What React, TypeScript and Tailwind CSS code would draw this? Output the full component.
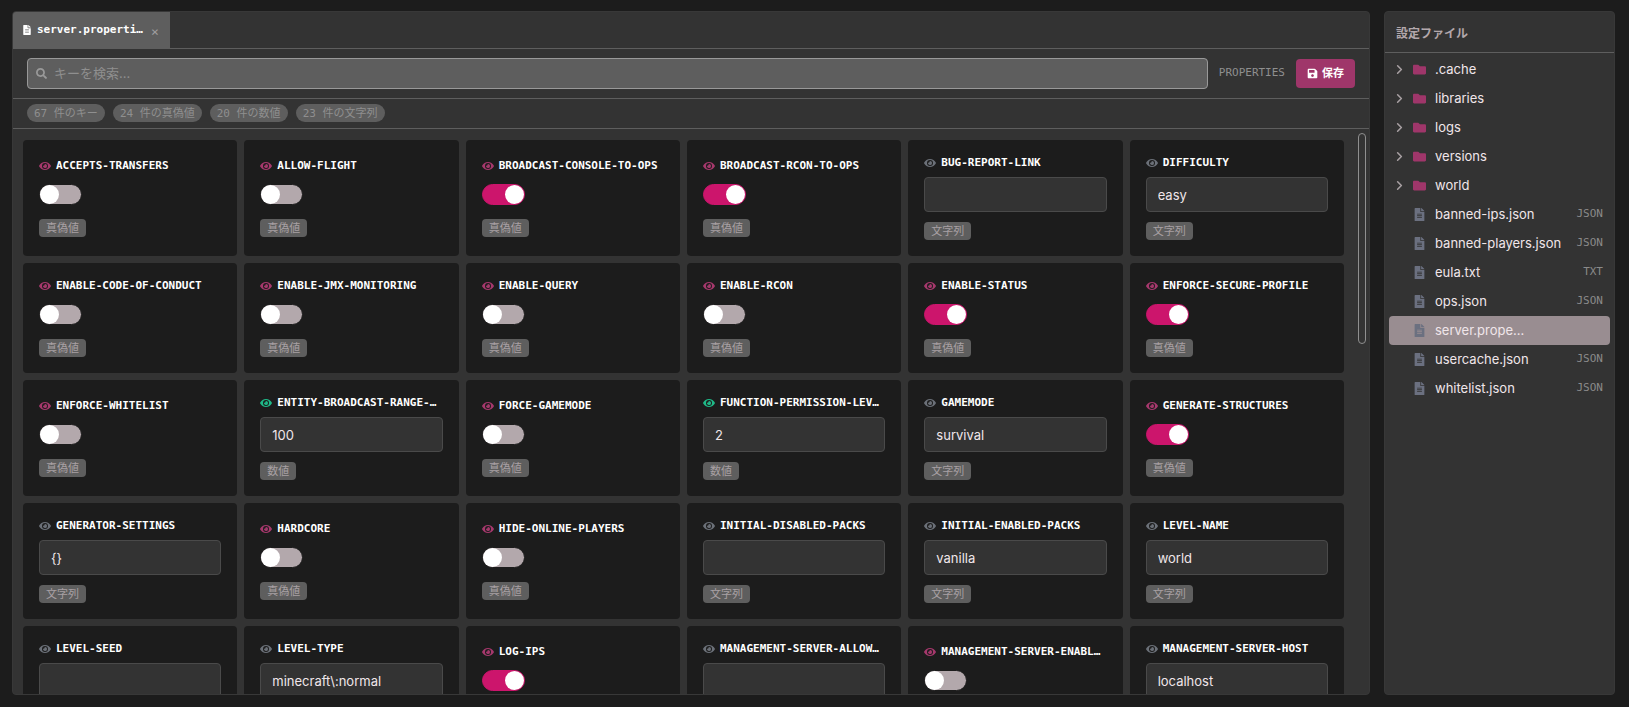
import React, { useState } from "react";
import { FaEye, FaFileAlt, FaFolder, FaSave, FaSearch } from "react-icons/fa";
import { ChevronRight } from "lucide-react";

type PropertyType = "bool" | "number" | "string";

interface Property {
  name: string;
  type: PropertyType;
  value: string;
}

interface FileEntry {
  name: string;
  ext?: string;
  folder?: boolean;
}

const initialProperties: Property[] = [
  { name: "accepts-transfers", type: "bool", value: "false" },
  { name: "allow-flight", type: "bool", value: "false" },
  { name: "broadcast-console-to-ops", type: "bool", value: "true" },
  { name: "broadcast-rcon-to-ops", type: "bool", value: "true" },
  { name: "bug-report-link", type: "string", value: "" },
  { name: "difficulty", type: "string", value: "easy" },
  { name: "enable-code-of-conduct", type: "bool", value: "false" },
  { name: "enable-jmx-monitoring", type: "bool", value: "false" },
  { name: "enable-query", type: "bool", value: "false" },
  { name: "enable-rcon", type: "bool", value: "false" },
  { name: "enable-status", type: "bool", value: "true" },
  { name: "enforce-secure-profile", type: "bool", value: "true" },
  { name: "enforce-whitelist", type: "bool", value: "false" },
  { name: "entity-broadcast-range-…", type: "number", value: "100" },
  { name: "force-gamemode", type: "bool", value: "false" },
  { name: "function-permission-lev…", type: "number", value: "2" },
  { name: "gamemode", type: "string", value: "survival" },
  { name: "generate-structures", type: "bool", value: "true" },
  { name: "generator-settings", type: "string", value: "{}" },
  { name: "hardcore", type: "bool", value: "false" },
  { name: "hide-online-players", type: "bool", value: "false" },
  { name: "initial-disabled-packs", type: "string", value: "" },
  { name: "initial-enabled-packs", type: "string", value: "vanilla" },
  { name: "level-name", type: "string", value: "world" },
  { name: "level-seed", type: "string", value: "" },
  { name: "level-type", type: "string", value: "minecraft\\:normal" },
  { name: "log-ips", type: "bool", value: "true" },
  { name: "management-server-allow…", type: "string", value: "" },
  { name: "management-server-enabl…", type: "bool", value: "false" },
  { name: "management-server-host", type: "string", value: "localhost" },
];

const files: FileEntry[] = [
  { name: ".cache", folder: true },
  { name: "libraries", folder: true },
  { name: "logs", folder: true },
  { name: "versions", folder: true },
  { name: "world", folder: true },
  { name: "banned-ips.json", ext: "JSON" },
  { name: "banned-players.json", ext: "JSON" },
  { name: "eula.txt", ext: "TXT" },
  { name: "ops.json", ext: "JSON" },
  { name: "server.prope..." },
  { name: "usercache.json", ext: "JSON" },
  { name: "whitelist.json", ext: "JSON" },
];

const stats = ["67 件のキー", "24 件の真偽値", "20 件の数値", "23 件の文字列"];

const typeLabels = { bool: "真偽値", number: "数値", string: "文字列" };
const eyeColors = { bool: "text-[#a5386c]", number: "text-[#1fb887]", string: "text-[#6b7078]" };

const mono = "font-['DejaVu_Sans_Mono','Noto_Sans_CJK_JP',monospace]";

function PropertyCard({ property, onChange }: { property: Property; onChange: (value: string) => void }) {
  const checked = property.value === "true";
  return (
    <div className="flex min-w-0 flex-col items-start justify-center rounded bg-[#1c1c1c] p-4">
      <label htmlFor={property.name} className={`${mono} flex w-full items-center gap-[5px] text-[11px] leading-[14px] font-bold whitespace-nowrap text-white uppercase`}>
        <FaEye size={12} className={`shrink-0 ${eyeColors[property.type]}`} />
        {property.name}
      </label>
      {property.type === "bool" ? (
        <input
          id={property.name}
          type="checkbox"
          role="switch"
          checked={checked}
          onChange={(e) => onChange(String(e.target.checked))}
          className="mt-[11px] mb-[14px] flex h-[21px] w-[43px] shrink-0 appearance-none items-center rounded-full border border-[#1c1c1c] bg-[#b3a8ac] before:size-[19px] before:rounded-full before:bg-white checked:justify-end checked:border-[#cc156c] checked:bg-[#cc156c]"
        />
      ) : (
        <input
          id={property.name}
          type="text"
          value={property.value}
          onChange={(e) => onChange(e.target.value)}
          className="mt-[7px] mb-[10px] h-[35px] w-full rounded border border-[#4a4a4a] bg-[#333333] px-[11px] text-[13px] text-[#f0e6ea] outline-none"
        />
      )}
      <span className={`${mono} rounded bg-[#5e5e5e] px-[7px] pt-px text-[11px] leading-[17px] text-[#a8a0a3]`}>{typeLabels[property.type]}</span>
    </div>
  );
}

function FileRow({ file, selected, onSelect }: { file: FileEntry; selected: boolean; onSelect: () => void }) {
  return (
    <li>
      <button
        onClick={onSelect}
        className={`flex h-[29px] w-full items-center rounded px-[7px] text-left text-[13px] text-[#f0e6ea] ${selected ? "bg-[#998d91]" : ""}`}
      >
        <span className="flex w-[17px] shrink-0">{file.folder && <ChevronRight size={15} strokeWidth={2.5} className="-ml-1 text-[#a8a0a3]" />}</span>
        <span className="flex w-[22px] shrink-0 items-center">
          {file.folder ? <FaFolder size={13} className="text-[#9f366a]" /> : <FaFileAlt size={13} className="text-[#6b7080]" />}
        </span>
        <span className="grow truncate">{file.name}</span>
        {file.ext && <span className={`${mono} text-[11px] text-[#8a8a8a]`}>{file.ext}</span>}
      </button>
    </li>
  );
}

export default function App() {
  const [properties, setProperties] = useState(initialProperties);
  const [search, setSearch] = useState("");
  const [selectedFile, setSelectedFile] = useState("server.prope...");

  const handleChange = (name: string, value: string) => {
    setProperties((prev) => prev.map((p) => (p.name === name ? { ...p, value } : p)));
  };

  const visible = properties.filter((p) => p.name.includes(search.toLowerCase()));

  return (
    <div className="flex h-screen gap-[14px] overflow-hidden bg-[#1c1c1c] pt-[11px] pr-[14px] pb-3 pl-3 font-['Inter','Noto_Sans_CJK_JP',sans-serif]">
      <main className="flex min-w-0 grow flex-col overflow-hidden rounded border border-[#383838] bg-[#333333]">
        <div className="flex h-[37px] shrink-0 border-b border-[#5e5e5e]">
          <div className={`${mono} flex w-[157px] items-center bg-[#5e5e5e] pl-[9px] text-[11px] text-white`}>
            <FaFileAlt size={10} className="mr-[5px] shrink-0" />
            <span className="pt-px font-bold whitespace-nowrap">server.properti…</span>
            <button aria-label="閉じる" className="ml-2 pt-1 text-[13px] text-[#a0a0a0]">
              ×
            </button>
          </div>
        </div>

        <div className="flex shrink-0 items-center gap-[11px] border-b border-[#5e5e5e] px-[14px] py-[9px]">
          <label className="flex h-[31px] grow items-center gap-[7px] rounded border border-[#999999] bg-[#5e5e5e] px-2">
            <FaSearch size={11} className="text-[#999999]" />
            <input
              type="text"
              aria-label="キーを検索"
              placeholder="キーを検索..."
              value={search}
              onChange={(e) => setSearch(e.target.value)}
              className="grow bg-transparent text-[13px] text-white outline-none placeholder:text-[#8f8f8f]"
            />
          </label>
          <span className={`${mono} text-[11px] text-[#8f8f8f]`}>PROPERTIES</span>
          <button className="flex h-[29px] items-center gap-1 rounded bg-[#9f366a] px-[11px] text-[11px] font-bold text-white">
            <FaSave size={11} />
            保存
          </button>
        </div>

        <div className="flex shrink-0 gap-2 border-b border-[#5e5e5e] px-[14px] pt-[5px] pb-[6px]">
          {stats.map((stat) => (
            <span key={stat} className={`${mono} rounded-full bg-[#5e5e5e] px-[7px] pt-px text-[11px] leading-[17px] text-[#8f8f8f]`}>
              {stat}
            </span>
          ))}
        </div>

        <div className="flex min-h-0 grow pr-[3px]">
          <div className="grid grow auto-rows-max grid-cols-6 gap-[7px] overflow-y-auto pt-[11px] pr-[14px] pl-[10px] [scrollbar-width:none]">
            {visible.map((property) => (
              <PropertyCard key={property.name} property={property} onChange={(value) => handleChange(property.name, value)} />
            ))}
          </div>
          <div className="mt-1 h-[211px] w-2 shrink-0 rounded-full border border-[#8f8f8f]" />
        </div>
      </main>

      <aside className="flex w-[231px] shrink-0 flex-col rounded border border-[#383838] bg-[#333333]">
        <h2 className="flex h-[41px] shrink-0 items-center border-b border-[#5e5e5e] px-[11px] pt-[3px] text-[12px] font-bold text-[#b3a8ac]">設定ファイル</h2>
        <ul className="px-1 pt-0.5">
          {files.map((file) => (
            <FileRow key={file.name} file={file} selected={file.name === selectedFile} onSelect={() => setSelectedFile(file.name)} />
          ))}
        </ul>
      </aside>
    </div>
  );
}
